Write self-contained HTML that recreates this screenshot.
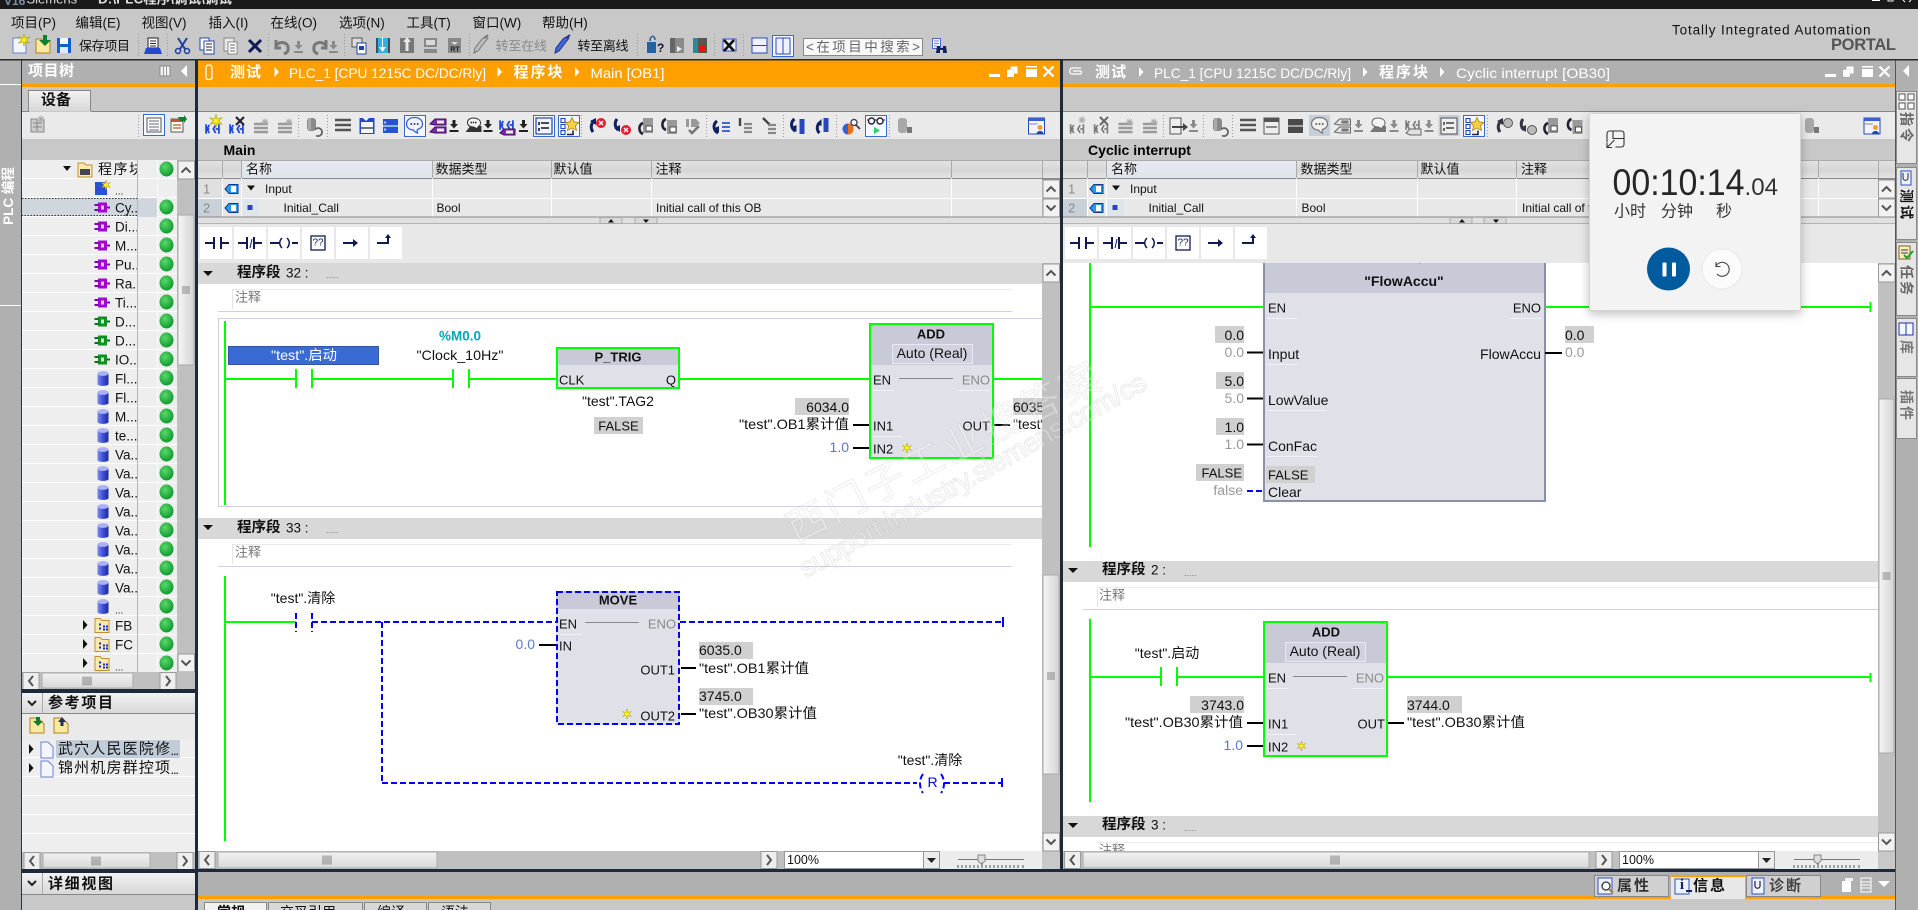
<!DOCTYPE html>
<html><head><meta charset="utf-8"><title>TIA Portal</title>
<style>
html,body{margin:0;padding:0;background:#c8c8c8;width:1918px;height:910px;overflow:hidden}
svg{display:block;position:absolute;left:0;top:0}
text{font-family:"Liberation Sans","Noto Sans CJK SC",sans-serif;font-size:12px;fill:#111;dominant-baseline:central}
.e{text-anchor:end}.m{text-anchor:middle}
.c{font-size:13px}.l{font-size:14px}.p{font-size:13px}.b{font-weight:bold}
.h{font-size:14px;fill:#fff;font-weight:bold}.hn{font-size:14px;fill:#fff}
.g{fill:#8a8a8a}.v{fill:#5878d8}.gv{fill:#999}
</style></head><body>
<svg width="1918" height="910" viewBox="0 0 1918 910" xmlns="http://www.w3.org/2000/svg">
<defs>
<radialGradient id="gd" cx=".4" cy=".35" r=".7"><stop offset="0" stop-color="#5ad86a"/><stop offset="1" stop-color="#0a962c"/></radialGradient>
<linearGradient id="cy" x1="0" x2="1" y1="0" y2="0"><stop offset="0" stop-color="#7a88f0"/><stop offset=".5" stop-color="#3e50d8"/><stop offset="1" stop-color="#1c2a90"/></linearGradient>
<linearGradient id="vt" x1="0" x2="1" y1="0" y2="0"><stop offset="0" stop-color="#f6f6f6"/><stop offset="1" stop-color="#d4d4d4"/></linearGradient>
<linearGradient id="hz" x1="0" x2="0" y1="0" y2="1"><stop offset="0" stop-color="#f2f2f2"/><stop offset="1" stop-color="#d8d8d8"/></linearGradient>
<linearGradient id="th" x1="0" x2="0" y1="0" y2="1"><stop offset="0" stop-color="#e4e4e4"/><stop offset=".55" stop-color="#d6d6d6"/><stop offset="1" stop-color="#e6e6e6"/></linearGradient>
<linearGradient id="thb" x1="0" x2="0" y1="0" y2="1"><stop offset="0" stop-color="#e6e9ee"/><stop offset="1" stop-color="#dfe4ec"/></linearGradient>
<pattern id="rowp" width="10" height="19" patternUnits="userSpaceOnUse" y="160"><rect width="10" height="19" fill="#eeeeee"/><rect y="18" width="10" height="1" fill="#fff"/></pattern>
<pattern id="rowq" width="10" height="19" patternUnits="userSpaceOnUse" y="739"><rect width="10" height="19" fill="#eeeeee"/><rect y="18" width="10" height="1" fill="#fff"/></pattern>
<filter id="sh" x="-20%" y="-20%" width="140%" height="140%"><feDropShadow dx="0" dy="3" stdDeviation="5" flood-color="#000" flood-opacity=".26"/></filter>

<ellipse id="dot" rx="7" ry="7.5" fill="url(#gd)"/>
<g id="ob"><rect x="-4" y="-5" width="9" height="10" fill="#a008d0"/><rect x="-1" y="-2" width="3" height="4" fill="#e8c8f0"/><path d="M-7.5-2.5h4M-7.5 2.5h4M5 0h3" stroke="#8000b0" stroke-width="2"/></g>
<g id="fb"><rect x="-4" y="-5" width="9" height="10" fill="#109020"/><rect x="-1" y="-2" width="3" height="4" fill="#c8f0c8"/><path d="M-7.5-2.5h4M-7.5 2.5h4M5 0h3" stroke="#0a7018" stroke-width="2"/></g>
<g id="cyl"><path d="M-5.5-5v10.5c0 2.5 11 2.5 11 0V-5z" fill="url(#cy)"/><ellipse cy="-5" rx="5.5" ry="2.4" fill="#aab0f4"/></g>
<g id="fold"><path d="M-7-7h5l2 2h7v12h-14z" fill="#fbe9b0" stroke="#c09030"/><path d="M-3-2h2v2h-2zM-3 2h2v2h-2zM1 0h2v2h-2zM1 3h2v2h-2zM4 0h2v2h-2zM4 3h2v2h-2z" fill="#1030d0"/></g>
<path id="ar" d="M0-5l4.5 5-4.5 5z" fill="#111"/>
<g id="up"><rect x="-8" y="-9" width="16.500" height="18" fill="#f2f2f2" stroke="#9a9a9a"/><path d="M-4.500 2.500l4.500-4.500 4.500 4.500" fill="none" stroke="#555" stroke-width="2"/></g>
<g id="dn"><rect x="-8" y="-9" width="16.500" height="18" fill="#f2f2f2" stroke="#9a9a9a"/><path d="M-4.500-2.500l4.500 4.500 4.500-4.500" fill="none" stroke="#555" stroke-width="2"/></g>
<g id="lf"><rect x="-8" y="-8.500" width="16" height="17" fill="#eee" stroke="#9a9a9a"/><path d="M2-5l-4 5 4 5" fill="none" stroke="#555" stroke-width="2"/></g>
<g id="rt"><rect x="-8" y="-8.500" width="16" height="17" fill="#eee" stroke="#9a9a9a"/><path d="M-2-5l4 5-4 5" fill="none" stroke="#555" stroke-width="2"/></g>
<path id="gh" d="M-4 0V9M-2 0V9M0 0V9M2 0V9M4 0V9" transform="translate(0,-4.500)" stroke="#666" stroke-width=".8"/>
<path id="gv" d="M-4-3h8M-4-1h8M-4 1h8M-4 3h8" stroke="#666" stroke-width=".8"/>
<path id="star" d="M0-5l1 3.500 3.500-1-2.500 2.500 2.500 2.500-3.500-1L0 5l-1-3.500-3.500 1L-2 0l-2.500-2.500 3.500 1z" fill="#f8f020" stroke="#b0a000" stroke-width=".5"/>
<g id="dl"><path d="M-1.500-6h3v4h2.500L0 2.500-4-2h2.500z" fill="#222"/><rect x="-4.500" y="4" width="9" height="2" fill="#222"/></g>
<g id="dlg"><path d="M-1.500-6h3v4h2.500L0 2.500-4-2h2.500z" fill="#8a8a8a"/><rect x="-4.500" y="4" width="9" height="2" fill="#8a8a8a"/></g>
<g id="kh"><path d="M-8-6v12M-8 0h4M-4-5l-3 5 3 5M4-5L1 0l3 5M8-6v12M4 0h4" fill="none" stroke="#2048d8" stroke-width="2.200" transform="translate(-.5,3) scale(.8)"/></g>
<g id="khg"><path d="M-8-6v12M-8 0h4M-4-5l-3 5 3 5M4-5L1 0l3 5M8-6v12M4 0h4" fill="none" stroke="#777" stroke-width="2" transform="translate(-.5,3) scale(.8)"/></g>
<g id="lns"><path d="M-7-3h14M-7 1h14M-7 5h14" stroke="#999" stroke-width="2.400"/><use href="#stg" x="4" y="-5"/></g>
<path id="stg" d="M0-3.500v7M-3.500 0h7M-2.500-2.500l5 5M2.500-2.500l-5 5" stroke="#aaa" stroke-width="1"/>
<g id="dbg"><rect x="-6" y="-8" width="9" height="13" rx="3" fill="#8a8a8a"/><rect x="-5" y="-8" width="3" height="12" fill="#aaa"/><path d="M2 3.500a4 4 0 1 1 1 6" fill="none" stroke="#666" stroke-width="1.800"/></g>
<g id="dbl"><rect x="-6" y="-8" width="9" height="15" rx="3" fill="#a8a8a8"/><rect x="3" y="1" width="5" height="6" fill="#777"/></g>
<g id="lst"><path d="M-8-6h5M-8-1h16M-8 4h16M-3-6h11" stroke="#555" stroke-width="2.400" transform="translate(0,1)"/></g>
<g id="win"><rect x="-7.500" y="-8" width="15" height="16" fill="#2048c8"/><rect x="-6" y="-4" width="12" height="11" fill="#f2f4ff"/><path d="M-6 2H6" stroke="#223" stroke-width="1.200"/><path d="M-4-8h6l-3 3z" fill="#fff"/></g>
<g id="winf"><rect x="-7.500" y="-7" width="15" height="14" fill="#2a50d8"/><path d="M-7.500 0h15" stroke="#cfe" stroke-width="1.200"/><path d="M-6-5l2 1.500-2 1.500M-6 2l2 1.500-2 1.500" fill="#fff"/></g>
<g id="bub"><path d="M0-7.500c-5 0-8 2.800-8 6.500 0 3.500 3 6 7 6 1 2 2.500 2.500 4 3-.5-1.500-.5-2.500 0-3.500 3-1 5-3 5-5.500 0-3.700-3-6.500-8-6.500z" fill="#eef4ff" stroke="#3a60d0" stroke-width="1.300"/><path d="M-4-1h1.600M-.8-1H.8M2.400-1H4" stroke="#334" stroke-width="1.800"/></g>
<g id="bubg"><path d="M0-7.500c-5 0-8 2.800-8 6.500 0 3.500 3 6 7 6 1 2 2.500 2.500 4 3-.5-1.500-.5-2.500 0-3.500 3-1 5-3 5-5.500 0-3.700-3-6.500-8-6.500z" fill="#f0f0f0" stroke="#777" stroke-width="1.200"/><path d="M-4-1h1.600M-.8-1H.8M2.400-1H4" stroke="#555" stroke-width="1.800"/></g>
<g id="tag1"><path d="M-8-2l5-5h11v6h-11zM-8 6l5-5h11v6h-11z" fill="#7a2aa8" stroke="#3c1060"/><path d="M-1-5.500h7v3h-7zM-1 2.500h7v3h-7z" fill="#eee"/></g>
<g id="tag1g"><path d="M-8-2l5-5h11v6h-11zM-8 6l5-5h11v6h-11z" fill="#e0e0e0" stroke="#666"/><path d="M-1-5.500h7v3h-7zM-1 2.500h7v3h-7z" fill="#777"/></g>
<g id="tag2"><path d="M-8 6h16V0H-3z" fill="#333"/><path d="M0-8c-4 0-6 2-6 4.500S-4 1 0 1c2 1 3 1 4 2 0-1 0-2 1-2.500 1.500-.8 2-2 2-3.500C7-6 4-8 0-8z" fill="#f4f4f4" stroke="#333"/><path d="M-3-3.500h1.500M-.8-3.500h1.500M1.500-3.500H3" stroke="#222" stroke-width="1.500"/></g>
<g id="tag2g"><path d="M-8 6h16V0H-3z" fill="#777"/><path d="M0-8c-4 0-6 2-6 4.500S-4 1 0 1c2 1 3 1 4 2 0-1 0-2 1-2.500 1.500-.8 2-2 2-3.500C7-6 4-8 0-8z" fill="#f4f4f4" stroke="#666"/></g>
<g id="tag3"><g transform="translate(0,-4)"><use href="#kh"/></g><path d="M-7 7l4-4h11v6h-11z" fill="#7a2aa8" stroke="#3c1060"/><rect x="-1" y="4.500" width="7" height="3" fill="#eee"/></g>
<g id="tag3g"><g transform="translate(0,-4)"><use href="#khg"/></g><path d="M-7 7l4-4h11v6h-11z" fill="#e0e0e0" stroke="#666"/></g>
<g id="tree"><rect x="-8" y="-8" width="16" height="16" fill="#f2f4ff" stroke="#2040b0" stroke-width="1.200"/><path d="M-5-4v3M-3-3H5M-5 2v3M-3 2H5" stroke="#112" stroke-width="1.600"/></g>
<g id="treeg"><rect x="-8" y="-8" width="16" height="16" fill="#eee" stroke="#666" stroke-width="1.200"/><path d="M-5-4v3M-3-3H5M-5 2v3M-3 2H5" stroke="#444" stroke-width="1.600"/></g>
<g id="favs"><path d="M-8-7h4v4h-4zM-8-1h4v4h-4zM-8 5h4v4h-4z" fill="#fff" stroke="#2040c0" stroke-width="1.100"/><path d="M3-8l2.200 4.400 4.800.6-3.500 3.300 1 4.700L3 2.500-1.500 5l1-4.700L-4-3l4.800-.6z" fill="#f8d040" stroke="#a07010" stroke-width=".7"/><path d="M4 5v4h-6" fill="none" stroke="#223" stroke-width="1.600"/></g>
<g id="rc1"><path d="M-2 6a8 8 0 0 1 1-11" fill="none" stroke="#102060" stroke-width="3"/><path d="M-5-5l6-3v7z" fill="#102060"/><circle cx="6" cy="-3" r="5" fill="#e02030"/><path d="M4-5l4 4M8-5l-4 4" stroke="#fff" stroke-width="1.400"/></g>
<g id="rc2"><path d="M-3-7a8 8 0 0 0 1 11" fill="none" stroke="#102060" stroke-width="3"/><path d="M-6 2l6 4v-7z" fill="#102060"/><circle cx="6" cy="4" r="5" fill="#e02030"/><path d="M4 2l4 4M8 2l-4 4" stroke="#fff" stroke-width="1.400"/></g>
<g id="rc1g"><path d="M-2 6a8 8 0 0 1 1-11" fill="none" stroke="#334" stroke-width="3"/><path d="M-5-5l6-3v7z" fill="#334"/><circle cx="6" cy="-3" r="4.500" fill="#bbb" stroke="#555"/></g>
<g id="rc2g"><path d="M-3-7a8 8 0 0 0 1 11" fill="none" stroke="#334" stroke-width="3"/><path d="M-6 2l6 4v-7z" fill="#334"/><circle cx="6" cy="4" r="4.500" fill="#bbb" stroke="#555"/></g>
<g id="rc3"><rect x="-2" y="-8" width="10" height="15" fill="#999"/><rect x="1" y="0" width="6" height="5" fill="#fff" stroke="#333" stroke-width=".8"/><path d="M-2 8a6 6 0 0 1 0-11" fill="none" stroke="#223" stroke-width="2.600"/></g>
<g id="rc4"><rect x="-2" y="-6" width="10" height="14" fill="#999"/><rect x="1" y="1" width="6" height="5" fill="#fff" stroke="#333" stroke-width=".8"/><path d="M-3-7a6 6 0 0 0 0 11" fill="none" stroke="#223" stroke-width="2.600"/></g>
<g id="rc5"><path d="M-7-7h3v8h-3zM-2-7h5l4 4-4 4h-5z" fill="#999"/><path d="M-4 4l3 3 7-7" fill="none" stroke="#777" stroke-width="2.600"/></g>
<g id="rc6"><path d="M-4-5a7 7 0 0 0 1 12" fill="none" stroke="#102060" stroke-width="3"/><path d="M-8 3l6 4V0z" fill="#102060"/><path d="M1-3h8M1 1h8M1 5h8" stroke="#4068d0" stroke-width="2"/></g>
<g id="rc7"><path d="M-6-8v8" stroke="#444" stroke-width="2.400"/><path d="M-2-2h8M-2 2h8M-2 6h8" stroke="#888" stroke-width="2.200"/></g>
<g id="rc8"><path d="M-7-8l7 7" stroke="#444" stroke-width="2.400"/><path d="M-2-1h8M-2 3h8M-2 7h8" stroke="#888" stroke-width="2.200"/></g>
<g id="rc9"><path d="M-3-7a7 7 0 0 0 1 12" fill="none" stroke="#102060" stroke-width="3"/><path d="M-6 1l5 5V-1z" fill="#102060"/><rect x="2" y="-7" width="5" height="15" fill="#2848b8"/></g>
<g id="rc10"><path d="M-2 7a7 7 0 0 1 1-11" fill="none" stroke="#102060" stroke-width="3"/><path d="M-5-2l5-5v7z" fill="#102060"/><rect x="2" y="-8" width="5" height="14" fill="#2848b8"/></g>
<g id="cmp"><circle cx="-3" cy="3" r="5.500" fill="#3a60d0"/><path d="M-3-2.500a5.500 5.500 0 0 1 0 11z" fill="#f07010"/><circle cx="3" cy="-3.500" r="3" fill="#fff" stroke="#445" stroke-width="1.400"/><path d="M5-1l4 4" stroke="#445" stroke-width="1.800"/></g>
<g id="gls"><path d="M-9-6h18" stroke="#223" stroke-width="1"/><circle cx="-4.500" cy="-5" r="3" fill="#fff" stroke="#223" stroke-width="1.400"/><circle cx="4" cy="-5" r="3" fill="#fff" stroke="#223" stroke-width="1.400"/><path d="M-2 1v7l6-3.500z" fill="#30d060"/></g>
<g id="usr"><rect x="-8" y="-8" width="16" height="16" fill="#f4f4f8" stroke="#2848b8"/><rect x="-8" y="-8" width="16" height="3" fill="#3a60d0"/><path d="M-8-2H1" stroke="#889"/><circle cx="3.500" cy="1.500" r="2.500" fill="#e8a030"/><path d="M0 8c0-4 7-4 7 0z" fill="#2048a0"/></g>
<g id="close"><path d="M-5-5L5 5M5-5L-5 5" stroke="#fff" stroke-width="2.200"/></g>
<g id="restore"><rect x="-1.500" y="-5" width="7" height="7" fill="#fff"/><rect x="-5" y="-2" width="7" height="7.500" fill="#fff" stroke="#000" stroke-opacity=".08"/></g>
</defs>

<rect width="1918" height="910" fill="#c8c8c8"/>

<!-- ============== LEFT EDITOR CONTENT ============== -->
<rect x="198" y="263" width="844" height="606" fill="#fff"/>
<rect x="198" y="263" width="844" height="21" fill="#d8d8d8"/>
<path d="M203 271l5 5 5-5z" fill="#111"/>
<text x="237" y="273" class="b" style="font-size:14.500px">程序段</text><text x="286" y="273" style="font-size:13.500px">32 :</text><text x="326" y="275" style="font-size:9px;fill:#777">.....</text>
<rect x="232" y="289" width="780" height="1" fill="#ececec"/><rect x="232" y="289" width="1" height="20" fill="#e4e4e4"/>
<text x="235" y="297" style="font-size:13px;fill:#777">注释</text>
<rect x="218" y="311" width="794" height="1" fill="#d0d0e4"/>
<rect x="218.500" y="318.500" width="840" height="188" fill="none" stroke="#cdcde8"/>
<rect x="224" y="321" width="2" height="184" fill="#00ff00"/>
<rect x="228" y="346" width="151" height="19" fill="#3a6bd4"/><rect x="228.500" y="346.500" width="150" height="18" fill="none" stroke="#223" stroke-dasharray="1 1" stroke-opacity=".6"/>
<text x="304" y="355" class="l m" style="fill:#fff" textLength="66" lengthAdjust="spacingAndGlyphs">"test".启动</text>
<text x="460" y="336" class="l m b" style="fill:#00a8b8;font-size:13.500px">%M0.0</text>
<text x="460" y="355" class="l m" textLength="87" lengthAdjust="spacingAndGlyphs">"Clock_10Hz"</text>
<path d="M225 379h71M296 369v19M312 369v19M312 379h141M453 369v19M469 369v19M469 379h87M680 379h189M993 379h49" stroke="#00ff00" stroke-width="2" fill="none"/>
<!-- P_TRIG -->
<rect x="556" y="347" width="124" height="42" fill="#e0e0e8"/><rect x="556" y="347" width="124" height="18" fill="#c8cad8"/><rect x="557" y="348" width="122" height="40" fill="none" stroke="#00ff00" stroke-width="2"/>
<text x="618" y="357" class="p m b">P_TRIG</text><text x="559" y="380" class="p">CLK</text><text x="676" y="380" class="p e">Q</text>
<text x="618" y="401" class="l m">"test".TAG2</text>
<rect x="594" y="417" width="49" height="17" fill="#d0d0d0"/><text x="618.500" y="426" class="p m">FALSE</text>
<!-- ADD -->
<rect x="869" y="323" width="125" height="136" fill="#e0e0e8"/><rect x="869" y="323" width="125" height="42" fill="#c8cad8"/><rect x="870" y="324" width="123" height="134" fill="none" stroke="#00ff00" stroke-width="2"/>
<text x="931" y="334" class="p m b">ADD</text><rect x="892.500" y="344.500" width="80" height="19" fill="#d0d2e0" stroke="#e8e8f0"/><text x="932" y="353" class="l m">Auto (Real)</text>
<text x="873" y="380" class="p">EN</text><text x="990" y="380" class="p e g">ENO</text><path d="M899 378.500h54" stroke="#888"/>
<path d="M872 390.500h22M958 390.500h32M872 436.500h30" stroke="#f2f2f6"/>
<text x="873" y="426" class="p">IN1</text><text x="990" y="426" class="p e">OUT</text><text x="873" y="449" class="p">IN2</text><use href="#star" x="907" y="448"/>
<path d="M853 425h16M853 448h16M994 425h16" stroke="#000" stroke-width="2"/>
<rect x="795" y="398" width="54" height="17" fill="#d0d0d0"/><text x="849" y="407" class="l e">6034.0</text>
<text x="849" y="424" class="l e" textLength="110" lengthAdjust="spacingAndGlyphs">"test".OB1累计值</text>
<text x="849" y="447" class="l e v">1.0</text>
<rect x="1013" y="398" width="40" height="17" fill="#d0d0d0"/><text x="1013" y="407" class="l">6035.0</text><text x="1013" y="424" class="l">"test".OB1累计值</text>
<!-- NW 33 -->
<rect x="198" y="518" width="844" height="21" fill="#d8d8d8"/><path d="M203 525l5 5 5-5z" fill="#111"/>
<text x="237" y="528" class="b" style="font-size:14.500px">程序段</text><text x="286" y="528" style="font-size:13.500px">33 :</text><text x="326" y="530" style="font-size:9px;fill:#777">.....</text>
<rect x="232" y="544" width="780" height="1" fill="#ececec"/><rect x="232" y="544" width="1" height="20" fill="#e4e4e4"/>
<text x="235" y="552" style="font-size:13px;fill:#777">注释</text><rect x="218" y="566" width="794" height="1" fill="#d0d0e4"/>
<rect x="224" y="576" width="2" height="265" fill="#00ff00"/>
<path d="M225 622h71" stroke="#00ff00" stroke-width="2"/>
<text x="303" y="598" class="l m">"test".清除</text>
<g stroke="#0000ff" stroke-width="2" fill="none" stroke-dasharray="6 3">
<path d="M296 613v19M312 613v19"/><path d="M312 622h244M382 622v161M382 783h535M944 783h58M680 622h323"/>
</g>
<path d="M1002 778v9M1003 617v10" stroke="#0000ff" stroke-width="2"/>
<path d="M923 774c-4 5-4 14 0 19M941 774c4 5 4 14 0 19" fill="none" stroke="#0000ff" stroke-width="2" stroke-dasharray="6 3"/>
<text x="932.500" y="782" class="m" style="fill:#0000ff;font-size:14px">R</text>
<text x="930" y="760" class="l m">"test".清除</text>
<!-- MOVE -->
<rect x="556" y="591" width="124" height="134" fill="#e0e0e8"/><rect x="556" y="591" width="124" height="18" fill="#c8cad8"/><rect x="557" y="592" width="122" height="132" fill="none" stroke="#0000ff" stroke-width="2" stroke-dasharray="6 3"/>
<text x="618" y="600" class="p m b">MOVE</text><text x="559" y="624" class="p">EN</text><text x="676" y="624" class="p e g">ENO</text><path d="M585 622.500h54" stroke="#888"/>
<path d="M560 634.500h22" stroke="#f2f2f6"/>
<text x="559" y="646" class="p">IN</text><text x="675" y="670" class="p e">OUT1</text><text x="675" y="716" class="p e">OUT2</text><use href="#star" x="627" y="714"/>
<path d="M539 645h17M681 668h15M681 714h15" stroke="#000" stroke-width="2"/>
<text x="535" y="644" class="l e v">0.0</text>
<rect x="699" y="642" width="54" height="17" fill="#d0d0d0"/><text x="699" y="650" class="l">6035.0</text><text x="699" y="668" class="l" textLength="110" lengthAdjust="spacingAndGlyphs">"test".OB1累计值</text>
<rect x="699" y="688" width="54" height="17" fill="#d0d0d0"/><text x="699" y="696" class="l">3745.0</text><text x="699" y="713" class="l" textLength="118" lengthAdjust="spacingAndGlyphs">"test".OB30累计值</text>

<!-- left editor scrollbars -->
<rect x="1042" y="263" width="18" height="588" fill="#c0c0c0"/>
<use href="#up" x="1051" y="273"/>
<rect x="1043" y="575" width="16" height="199" fill="url(#vt)" stroke="#aaa"/><use href="#gv" x="1051" y="676"/>
<use href="#dn" x="1051" y="842"/>
<rect x="198" y="851" width="844" height="18" fill="#c0c0c0"/>
<use href="#lf" x="207" y="860"/><rect x="218" y="852" width="219" height="16" fill="url(#hz)" stroke="#aaa"/><use href="#gh" x="327" y="860"/>
<use href="#rt" x="769" y="860"/>
<rect x="784.500" y="851.500" width="139" height="17" fill="#fff" stroke="#999"/><text x="787" y="860" style="font-size:12.500px">100%</text>
<rect x="923.500" y="851.500" width="16" height="17" fill="#ececec" stroke="#999"/><path d="M927 858h9l-4.500 5z" fill="#222"/>
<rect x="940" y="851" width="102" height="18" fill="#ececec"/>
<path d="M958 859.500h66" stroke="#777"/><path d="M978 855h7v6l-3.500 3-3.500-3z" fill="#ddd" stroke="#888"/>
<path d="M958 865v3M962 865v3M966 865v3M970 865v3M974 865v3M978 865v3M982 863v5M986 865v3M990 865v3M994 865v3M998 865v3M1002 865v3M1006 865v3M1010 865v3M1014 865v3M1018 865v3M1023 865v3" stroke="#555"/>

<!-- ============== RIGHT EDITOR CONTENT ============== -->
<rect x="1063" y="263" width="815" height="588" fill="#fff"/>
<rect x="1089" y="263" width="2" height="284" fill="#00ff00"/>
<path d="M1090 307h173M1545 307h326M1870.500 302v10" stroke="#00ff00" stroke-width="2"/>
<rect x="1263" y="263" width="283" height="239" fill="#e0e0e8"/><rect x="1263" y="263" width="283" height="30" fill="#c8cad8"/><rect x="1264" y="258" width="281" height="243" fill="none" stroke="#8a90a8" stroke-width="2"/>
<text x="1404" y="258" class="m b" style="font-size:14px;fill:#00a8b8">%DB17/00</text>
<text x="1404" y="281" class="l m b" style="font-size:14px">"FlowAccu"</text>
<text x="1268" y="308" class="l" style="font-size:13px">EN</text><text x="1541" y="308" class="p e">ENO</text>
<text x="1268" y="354" class="l">Input</text><text x="1268" y="400" class="l">LowValue</text><text x="1268" y="446" class="l">ConFac</text>
<rect x="1266" y="466" width="49" height="17" fill="#d0d0d0"/><text x="1268" y="475" class="p">FALSE</text><text x="1268" y="492" class="l">Clear</text>
<text x="1541" y="354" class="l e" textLength="61" lengthAdjust="spacingAndGlyphs">FlowAccu</text>
<path d="M1267 318.500h30M1510 318.500h31M1267 364.500h30M1267 410.500h60M1267 456.500h50" stroke="#f2f2f6"/>
<path d="M1247 352.500h16M1247 398.500h16M1247 444.500h16M1545 353h17" stroke="#000" stroke-width="2"/>
<path d="M1247 491h16" stroke="#0000ff" stroke-width="2" stroke-dasharray="6 3"/>
<rect x="1215" y="326" width="29" height="17" fill="#d0d0d0"/><text x="1244" y="335" class="l e">0.0</text><text x="1244" y="352" class="l e gv">0.0</text>
<rect x="1216" y="372" width="28" height="17" fill="#d0d0d0"/><text x="1244" y="381" class="l e">5.0</text><text x="1244" y="398" class="l e gv">5.0</text>
<rect x="1216" y="418" width="28" height="17" fill="#d0d0d0"/><text x="1244" y="427" class="l e">1.0</text><text x="1244" y="444" class="l e gv">1.0</text>
<rect x="1196" y="464" width="48" height="17" fill="#d0d0d0"/><text x="1242" y="473" class="p e">FALSE</text><text x="1243" y="490" class="l e gv">false</text>
<rect x="1565" y="326" width="29" height="17" fill="#d0d0d0"/><text x="1565" y="335" class="l">0.0</text><text x="1565" y="352" class="l gv">0.0</text>
<rect x="1063" y="561" width="815" height="21" fill="#d8d8d8"/><path d="M1068 568l5 5 5-5z" fill="#111"/>
<text x="1102" y="570" class="b" style="font-size:14.500px">程序段</text><text x="1151" y="570" style="font-size:13.500px">2 :</text><text x="1184" y="573" style="font-size:9px;fill:#777">.....</text>
<rect x="1097" y="587" width="781" height="1" fill="#ececec"/><rect x="1097" y="587" width="1" height="20" fill="#e4e4e4"/>
<text x="1099" y="595" style="font-size:13px;fill:#777">注释</text><rect x="1083" y="609" width="795" height="1" fill="#d0d0e4"/>
<rect x="1089" y="619" width="2" height="183" fill="#00ff00"/>
<path d="M1090 677h71M1161 667v19M1177 667v19M1177 677h86M1388 677h483M1870.500 673v9" stroke="#00ff00" stroke-width="2" fill="none"/>
<text x="1167" y="653" class="l m">"test".启动</text>
<rect x="1263" y="621" width="125" height="136" fill="#e0e0e8"/><rect x="1263" y="621" width="125" height="42" fill="#c8cad8"/><rect x="1264" y="622" width="123" height="134" fill="none" stroke="#00ff00" stroke-width="2"/>
<text x="1326" y="632" class="p m b">ADD</text><rect x="1285.500" y="642.500" width="80" height="19" fill="#d0d2e0" stroke="#e8e8f0"/><text x="1325" y="651" class="l m">Auto (Real)</text>
<text x="1268" y="678" class="p">EN</text><text x="1384" y="678" class="p e g">ENO</text><path d="M1293 676.500h54" stroke="#888"/>
<path d="M1266 688.500h22M1352 688.500h32M1266 734.500h30" stroke="#f2f2f6"/>
<text x="1268" y="724" class="p">IN1</text><text x="1385" y="724" class="p e">OUT</text><text x="1268" y="747" class="p">IN2</text><use href="#star" x="1301.500" y="746"/>
<path d="M1247 723h16M1247 746h16M1388 723h16" stroke="#000" stroke-width="2"/>
<rect x="1190" y="696" width="54" height="17" fill="#d0d0d0"/><text x="1244" y="705" class="l e">3743.0</text>
<text x="1243" y="722" class="l e" textLength="118" lengthAdjust="spacingAndGlyphs">"test".OB30累计值</text><text x="1243" y="745" class="l e v">1.0</text>
<rect x="1407" y="696" width="55" height="17" fill="#d0d0d0"/><text x="1407" y="705" class="l">3744.0</text><text x="1407" y="722" class="l" textLength="118" lengthAdjust="spacingAndGlyphs">"test".OB30累计值</text>
<rect x="1063" y="816" width="815" height="21" fill="#d8d8d8"/><path d="M1068 823l5 5 5-5z" fill="#111"/>
<text x="1102" y="825" class="b" style="font-size:14.500px">程序段</text><text x="1151" y="825" style="font-size:13.500px">3 :</text><text x="1184" y="828" style="font-size:9px;fill:#777">.....</text>
<rect x="1097" y="842" width="781" height="1" fill="#ececec"/><text x="1099" y="850" style="font-size:13px;fill:#777">注释</text>
<!-- right editor scrollbars -->
<rect x="1878" y="263" width="17" height="588" fill="#c0c0c0"/><use href="#up" x="1886.500" y="273"/>
<rect x="1879" y="399" width="15" height="354" fill="url(#vt)" stroke="#aaa"/><use href="#gv" x="1886.500" y="576"/><use href="#dn" x="1886.500" y="842"/>
<rect x="1063" y="851" width="815" height="18" fill="#c0c0c0"/>
<use href="#lf" x="1072.500" y="860"/><rect x="1083" y="852" width="506" height="16" fill="url(#hz)" stroke="#aaa"/><use href="#gh" x="1335" y="860"/>
<use href="#rt" x="1604" y="860"/>
<rect x="1619.500" y="851.500" width="139" height="17" fill="#fff" stroke="#999"/><text x="1622" y="860" style="font-size:12.500px">100%</text>
<rect x="1758.500" y="851.500" width="16" height="17" fill="#ececec" stroke="#999"/><path d="M1762 858h9l-4.500 5z" fill="#222"/>
<rect x="1775" y="851" width="103" height="18" fill="#ececec"/>
<path d="M1794 859.500h66" stroke="#777"/><path d="M1814 855h7v6l-3.500 3-3.500-3z" fill="#ddd" stroke="#888"/>
<path d="M1794 865v3M1798 865v3M1802 865v3M1806 865v3M1810 865v3M1814 865v3M1818 863v5M1822 865v3M1826 865v3M1830 865v3M1834 865v3M1838 865v3M1842 865v3M1846 865v3M1850 865v3M1854 865v3M1859 865v3" stroke="#555"/>

<!-- watermark -->
<g transform="rotate(-29 801 570)">
<text x="801" y="570" style="font-size:28px;fill:#fff;fill-opacity:.3;stroke:#b4b4b4;stroke-opacity:.28;stroke-width:1" textLength="392">support.industry.siemens.com/cs</text>
</g>
<g transform="rotate(-27 790 532)">
<text x="790" y="532" style="font-size:40px;fill:#fff;fill-opacity:.3;stroke:#b4b4b4;stroke-opacity:.24;stroke-width:1" textLength="345">西门子工业搜答案</text>
</g>

<!-- ============== TOP PANELS ============== -->
<!-- left editor top -->
<rect x="198" y="60" width="862" height="27" fill="#ffa000"/>
<rect x="198" y="87" width="862" height="24" fill="#c8c8c8"/><rect x="198" y="111" width="862" height="1" fill="#858585"/>
<rect x="198" y="112" width="862" height="27" fill="#eaeaea"/>
<rect x="198" y="139" width="862" height="21" fill="#c8c8c8"/>
<text x="223.500" y="150" class="b" style="font-size:14px;fill:#000">Main</text>
<!-- table -->
<rect x="198" y="160" width="862" height="19" fill="url(#th)"/>
<rect x="241" y="160" width="191" height="19" fill="url(#thb)"/>
<rect x="198" y="160" width="862" height="1" fill="#aaa"/><rect x="198" y="178" width="862" height="1.500" fill="#888"/>
<rect x="198" y="179" width="844" height="38" fill="#e8e8e8"/>
<rect x="198" y="179" width="24" height="19" fill="#e0e0e0"/><rect x="198" y="198" width="24" height="19" fill="#c8d0d8"/>
<rect x="222" y="179" width="19" height="38" fill="#e6e6e6"/>
<rect x="241" y="198" width="18" height="19" fill="#e0e4ec"/>
<path d="M198 198.500h844" stroke="#fff"/>
<path d="M222.500 160v57M241.500 160v57M432.500 160v57M551.500 160v57M651.500 160v57M951.500 160v57" stroke="#fff"/>
<path d="M222.500 160v18M241.500 160v18M432.500 160v18M551.500 160v18M651.500 160v18M951.500 160v18M1042.500 160v18" stroke="#aaa"/>
<text x="246" y="169" style="font-size:13px">名称</text><text x="435.500" y="169" style="font-size:13px">数据类型</text><text x="553.500" y="169" style="font-size:13px">默认值</text><text x="655.500" y="169" style="font-size:13px">注释</text>
<text x="203" y="189" class="g" style="font-size:13px">1</text><text x="203" y="208" class="g" style="font-size:13px">2</text>
<path d="M225 189l4-4.500h9v9h-9z" fill="#2a9ae8" stroke="#0a3a90"/><rect x="231" y="186" width="5" height="6" fill="#fff"/>
<path d="M225 208l4-4.500h9v9h-9z" fill="#2a9ae8" stroke="#0a3a90"/><rect x="231" y="205" width="5" height="6" fill="#fff"/>
<path d="M247 185.500h8l-4 5z" fill="#111"/><rect x="247.500" y="205" width="5" height="5" fill="#2a40d0"/>
<text x="265" y="189">Input</text><text x="283.500" y="208">Initial_Call</text><text x="436.500" y="208">Bool</text><text x="656" y="208">Initial call of this OB</text>
<use href="#up" x="1051" y="189"/><use href="#dn" x="1051" y="208"/>
<rect x="198" y="217" width="862" height="7" fill="#e0e0e0"/><path d="M198 217h862M198 224h862" stroke="#888"/>
<rect x="600" y="217.500" width="22" height="6" fill="#d8d8d8" stroke="#aaa"/><rect x="635" y="217.500" width="22" height="6" fill="#d8d8d8" stroke="#aaa"/>
<path d="M608 222.500l3-3.500 3 3.500z" fill="#111"/><path d="M643 219.500l3 3.500 3-3.500z" fill="#111"/>
<!-- instr bar -->
<rect x="198" y="224" width="862" height="39" fill="#e8e8e8"/>
<g fill="#fff"><rect x="200" y="227" width="32" height="32"/><rect x="234" y="227" width="32" height="32"/><rect x="268" y="227" width="32" height="32"/><rect x="302" y="227" width="32" height="32"/><rect x="336" y="227" width="32" height="32"/><rect x="370" y="227" width="32" height="32"/></g>
<g fill="none" stroke="#101a50" stroke-width="2"><path d="M205 243h9M214 237v12M221 237v12M221 243h8"/><path d="M238 243h9M247 237v12M254 237v12M254 243h8"/><path d="M250 248l2-9" stroke-width="1"/><path d="M270 243h10M292 243h6"/><path d="M282 238c-3 3-3 7 0 10M287 238c3 3 3 7 0 10" stroke-width="1.500"/><rect x="311" y="236" width="14" height="14" stroke-width="1.300"/><path d="M343 243h12"/><path d="M377 243h11V236"/></g>
<text x="318" y="243" class="m" style="font-size:10px;fill:#101a50">??</text>
<path d="M353 239l5 4-5 4zM385 238l3-4 3 4z" fill="#101a50"/>
<!-- left editor toolbar -->
<g>
<use href="#kh" x="213" y="126"/><use href="#star" transform="translate(216,121) scale(1.300)"/>
<use href="#kh" x="237" y="126"/><path d="M236 117l8 8M244 117l-8 8" stroke="#223" stroke-width="2.200"/>
<use href="#lns" x="261" y="127"/><use href="#lns" x="285" y="127"/>
<path d="M298.500 115v22M327.500 115v22M581.500 115v22M706.500 115v22M783.500 115v22M836.500 115v22M889.500 115v22" stroke="#999" stroke-dasharray="1 2"/>
<use href="#dbg" x="313" y="126"/>
<use href="#lst" x="343" y="125"/>
<use href="#win" x="367" y="126"/><use href="#winf" x="390.500" y="126"/>
<rect x="404.500" y="115.500" width="21" height="21" fill="#f4f8ff" stroke="#3a6ad0"/><use href="#bub" x="414.500" y="125"/>
<use href="#tag1" x="438" y="126"/><use href="#dl" x="454" y="126"/>
<use href="#tag2" x="473.500" y="126"/><use href="#dl" x="488" y="126"/>
<use href="#tag3" x="507" y="126"/><use href="#dl" x="523.500" y="126"/>
<rect x="533.500" y="115.500" width="21" height="21" fill="#f4f8ff" stroke="#3a6ad0"/><use href="#tree" x="544" y="126"/>
<rect x="558.500" y="115.500" width="21" height="21" fill="#f4f8ff" stroke="#3a6ad0"/><use href="#favs" x="569" y="125.500"/>
<use href="#rc1" x="595" y="126"/><use href="#rc2" x="620" y="126"/>
<use href="#rc3" x="645" y="126"/><use href="#rc4" x="669" y="126"/><use href="#rc5" x="693" y="126"/>
<use href="#rc6" x="721" y="126"/><use href="#rc7" x="746" y="126"/><use href="#rc8" x="770" y="126"/>
<use href="#rc9" x="797.500" y="126"/><use href="#rc10" x="821.500" y="126"/>
<use href="#cmp" x="851" y="126"/>
<rect x="865.500" y="115.500" width="21" height="21" fill="#f4f8ff" stroke="#3a6ad0"/><use href="#gls" x="876" y="126"/>
<use href="#dbl" x="904" y="126"/><use href="#usr" x="1036.500" y="126"/>
</g>
<!-- left header -->
<path d="M209 65c-3 0-3 2-3 4v9c0 2 6 2 6 0v-9c0-2 0-4-3-4z" fill="none" stroke="#fff" stroke-width="1.300"/>
<text x="230" y="72.500" class="h" textLength="31" style="font-size:15px">测试</text>
<path d="M274.500 67l4.500 5-4.500 5z" fill="#fff"/>
<text x="289" y="73" class="hn" textLength="197" lengthAdjust="spacingAndGlyphs">PLC_1 [CPU 1215C DC/DC/Rly]</text>
<path d="M497.500 67l4.500 5-4.500 5z" fill="#fff"/>
<text x="513.500" y="72.500" class="h" textLength="49" style="font-size:15px">程序块</text>
<path d="M575 67l4.500 5-4.500 5z" fill="#fff"/>
<text x="590.500" y="73" class="hn" textLength="74" lengthAdjust="spacingAndGlyphs">Main [OB1]</text>
<rect x="989" y="74" width="11" height="3" fill="#fff"/><use href="#restore" x="1012" y="71.500"/>
<rect x="1026" y="66" width="11" height="11" fill="#fff"/><rect x="1026" y="67.500" width="11" height="1.500" fill="#ffa000"/><use href="#close" x="1048.500" y="71.500"/>

<!-- right editor top -->
<rect x="1063" y="60" width="832" height="24" fill="#b0b0b0"/><rect x="1063" y="84" width="832" height="3" fill="#ffa000"/>
<rect x="1063" y="87" width="832" height="24" fill="#c8c8c8"/><rect x="1063" y="111" width="832" height="1" fill="#858585"/>
<rect x="1063" y="112" width="832" height="27" fill="#eaeaea"/>
<rect x="1063" y="139" width="832" height="21" fill="#c8c8c8"/>
<text x="1088" y="150" class="b" textLength="103" lengthAdjust="spacingAndGlyphs" style="font-size:14px;fill:#000">Cyclic interrupt</text>
<rect x="1063" y="160" width="832" height="19" fill="url(#th)"/><rect x="1106" y="160" width="190" height="19" fill="url(#thb)"/>
<rect x="1063" y="160" width="832" height="1" fill="#aaa"/><rect x="1063" y="178" width="832" height="1.500" fill="#888"/>
<rect x="1063" y="179" width="815" height="38" fill="#e8e8e8"/>
<rect x="1063" y="179" width="24" height="19" fill="#e0e0e0"/><rect x="1063" y="198" width="24" height="19" fill="#c8d0d8"/>
<rect x="1106" y="198" width="18" height="19" fill="#e0e4ec"/>
<path d="M1063 198.500h815" stroke="#fff"/>
<path d="M1087.500 160v57M1106.500 160v57M1296.500 160v57M1417.500 160v57M1516.500 160v57M1818.500 160v57" stroke="#fff"/>
<path d="M1087.500 160v18M1106.500 160v18M1296.500 160v18M1417.500 160v18M1516.500 160v18M1818.500 160v18M1878.500 160v18" stroke="#aaa"/>
<text x="1111" y="169" style="font-size:13px">名称</text><text x="1300.500" y="169" style="font-size:13px">数据类型</text><text x="1420.500" y="169" style="font-size:13px">默认值</text><text x="1521" y="169" style="font-size:13px">注释</text>
<text x="1068" y="189" class="g" style="font-size:13px">1</text><text x="1068" y="208" class="g" style="font-size:13px">2</text>
<path d="M1090 189l4-4.500h9v9h-9z" fill="#2a9ae8" stroke="#0a3a90"/><rect x="1096" y="186" width="5" height="6" fill="#fff"/>
<path d="M1090 208l4-4.500h9v9h-9z" fill="#2a9ae8" stroke="#0a3a90"/><rect x="1096" y="205" width="5" height="6" fill="#fff"/>
<path d="M1112 185.500h8l-4 5z" fill="#111"/><rect x="1112.500" y="205" width="5" height="5" fill="#2a40d0"/>
<text x="1130" y="189">Input</text><text x="1148.500" y="208">Initial_Call</text><text x="1301.500" y="208">Bool</text><text x="1522" y="208">Initial call of this OB</text>
<use href="#up" x="1886.500" y="189"/><use href="#dn" x="1886.500" y="208"/>
<rect x="1063" y="217" width="832" height="7" fill="#e0e0e0"/><path d="M1063 217h832M1063 224h832" stroke="#888"/>
<rect x="1450" y="217.500" width="22" height="6" fill="#d8d8d8" stroke="#aaa"/><rect x="1484" y="217.500" width="22" height="6" fill="#d8d8d8" stroke="#aaa"/>
<path d="M1459 222.500l3-3.500 3 3.500z" fill="#111"/><path d="M1493 219.500l3 3.500 3-3.500z" fill="#111"/>
<rect x="1063" y="224" width="832" height="39" fill="#e8e8e8"/>
<g fill="#fff"><rect x="1065" y="227" width="32" height="32"/><rect x="1099" y="227" width="32" height="32"/><rect x="1133" y="227" width="32" height="32"/><rect x="1167" y="227" width="32" height="32"/><rect x="1201" y="227" width="32" height="32"/><rect x="1235" y="227" width="32" height="32"/></g>
<g fill="none" stroke="#101a50" stroke-width="2"><path d="M1070 243h9M1079 237v12M1086 237v12M1086 243h8"/><path d="M1103 243h9M1112 237v12M1119 237v12M1119 243h8"/><path d="M1115 248l2-9" stroke-width="1"/><path d="M1135 243h10M1157 243h6"/><path d="M1147 238c-3 3-3 7 0 10M1152 238c3 3 3 7 0 10" stroke-width="1.500"/><rect x="1176" y="236" width="14" height="14" stroke-width="1.300"/><path d="M1208 243h12"/><path d="M1242 243h11V236"/></g>
<text x="1183" y="243" class="m" style="font-size:10px;fill:#101a50">??</text>
<path d="M1218 239l5 4-5 4zM1250 238l3-4 3 4z" fill="#101a50"/>
<!-- right toolbar -->
<g>
<use href="#khg" x="1077.500" y="126"/><use href="#stg" x="1082" y="120"/>
<use href="#khg" x="1101.500" y="126"/><path d="M1100 117l8 8M1108 117l-8 8" stroke="#666" stroke-width="2"/>
<use href="#lns" x="1125.500" y="127"/><use href="#lns" x="1150" y="127"/>
<path d="M1163.500 115v22M1203.500 115v22M1232.500 115v22M1487.500 115v22" stroke="#999" stroke-dasharray="1 2"/>
<rect x="1170" y="118" width="11" height="16" fill="#eee" stroke="#555"/><path d="M1172 126h11v-3l5 4-5 4v-3h-11z" fill="#444"/>
<use href="#dlg" x="1193.500" y="126"/><use href="#dbg" x="1219" y="126"/>
<use href="#lst" x="1248" y="125"/>
<rect x="1264" y="118" width="15" height="16" fill="#eee" stroke="#555"/><rect x="1264" y="118" width="15" height="4" fill="#555"/><path d="M1266 127h11" stroke="#444" stroke-width="1.200"/>
<rect x="1288" y="119" width="15" height="14" fill="#4a4a4a"/><path d="M1288 126h15" stroke="#ddd" stroke-width="1.200"/>
<rect x="1309" y="115" width="21" height="21" fill="#c6cfd8"/><use href="#bubg" x="1319.500" y="125"/>
<use href="#tag1g" x="1342.500" y="126"/><use href="#dlg" x="1358.500" y="126"/>
<use href="#tag2g" x="1378" y="126"/><use href="#dlg" x="1394" y="126"/>
<use href="#tag3g" x="1413" y="126"/><use href="#dlg" x="1429" y="126"/>
<rect x="1438.500" y="115" width="21" height="21" fill="#c6cfd8"/><use href="#treeg" x="1449" y="126"/>
<rect x="1463.500" y="115.500" width="21" height="21" fill="#f4f8ff" stroke="#3a6ad0"/><use href="#favs" x="1474" y="125.500"/>
<use href="#rc1g" x="1502" y="126"/><use href="#rc2g" x="1526" y="126"/><use href="#rc3" x="1550" y="126"/><use href="#rc4" x="1574.500" y="126"/>
<use href="#dbl" x="1811" y="126"/><use href="#usr" x="1872" y="126"/>
</g>
<!-- right header -->
<path d="M1081 68h-9c-3 0-3 6 0 6h8c2 0 2-3 0-3h-7" fill="none" stroke="#fff" stroke-width="1.200"/>
<text x="1095" y="72.500" class="h" textLength="31" style="font-size:15px">测试</text>
<path d="M1139 67l4.500 5-4.500 5z" fill="#fff"/>
<text x="1154" y="73" class="hn" textLength="197" lengthAdjust="spacingAndGlyphs">PLC_1 [CPU 1215C DC/DC/Rly]</text>
<path d="M1363 67l4.500 5-4.500 5z" fill="#fff"/>
<text x="1379" y="72.500" class="h" textLength="49" style="font-size:15px">程序块</text>
<path d="M1440 67l4.500 5-4.500 5z" fill="#fff"/>
<text x="1456" y="73" class="hn" textLength="154" lengthAdjust="spacingAndGlyphs">Cyclic interrupt [OB30]</text>
<rect x="1825" y="74" width="11" height="3" fill="#fff"/><use href="#restore" x="1848" y="71.500"/>
<rect x="1862" y="66" width="11" height="11" fill="#fff"/><rect x="1862" y="67.500" width="11" height="1.500" fill="#b0b0b0"/><use href="#close" x="1884.500" y="71.500"/>

<!-- ============== LEFT STRIP ============== -->
<rect x="0" y="60" width="21" height="850" fill="#b0b0b0"/><rect x="21" y="60" width="1" height="850" fill="#2c3440"/>
<rect x="0" y="84" width="21" height="1" fill="#fff"/><rect x="0" y="305" width="21" height="1" fill="#fff"/>
<text transform="translate(8.500,196) rotate(-90)" class="m b" style="fill:#fff;font-size:13.500px">PLC 编程</text>

<!-- ============== PROJECT TREE ============== -->
<rect x="22" y="60" width="173" height="24" fill="#b0b0b0"/><rect x="22" y="84" width="173" height="3" fill="#ffa000"/>
<text x="28" y="71" class="b" style="fill:#fff;font-size:15px" textLength="46">项目树</text>
<rect x="160" y="66" width="10" height="10" fill="#f4f4f4" stroke="#888"/><path d="M163.500 66v10M166.500 66v10" stroke="#999"/>
<path d="M187 65v12l-6-6z" fill="#fff"/>
<rect x="22" y="87" width="173" height="24" fill="#c8c8c8"/>
<path d="M22 111.500h7M91 111.500h104" stroke="#858585"/>
<path d="M28.500 111V90.500h62V111" fill="url(#hz)" stroke="#888"/>
<text x="41" y="100" class="b" style="font-size:15px">设备</text>
<rect x="22" y="112" width="173" height="27" fill="#eaeaea"/>
<rect x="31" y="119" width="13" height="13" fill="#ccc" stroke="#888"/><path d="M33 123h9M33 127h9M37 120v11" stroke="#888"/><use href="#stg" x="41" y="119"/>
<path d="M138.500 115v22" stroke="#999" stroke-dasharray="1 2"/>
<rect x="143.500" y="114.500" width="21" height="21" fill="#f4f8ff" stroke="#3a6ad0"/><rect x="147" y="118" width="14" height="14" fill="#fff" stroke="#555"/><path d="M149 121h10M149 124h10M149 127h10M149 130h10" stroke="#667" stroke-width="1"/>
<rect x="171" y="119" width="12" height="13" fill="#fff" stroke="#555"/><rect x="171" y="119" width="12" height="3" fill="#d05030"/><path d="M173 125h8M173 128h8" stroke="#d07040" stroke-width="1.500"/><path d="M178 117h6v-2l3 4-3 4v-2h-4z" fill="#108030"/>
<rect x="22" y="139" width="173" height="21" fill="#c8c8c8"/>
<rect x="22" y="160" width="155" height="512" fill="url(#rowp)"/>
<rect x="22" y="198" width="135" height="18" fill="#cfd6de"/>
<path d="M22 198.500h116.500v17H22" fill="none" stroke="#333" stroke-dasharray="1.500 1.500"/>
<!-- tree items -->
<path d="M63 166h8l-4 5z" fill="#111"/>
<path d="M78 163h6l2 2h6v12h-14z" fill="#fbe9b0" stroke="#c09030"/><rect x="80" y="169" width="10" height="6" fill="#445"/>
<text x="98" y="169" style="font-size:14px;letter-spacing:1.500px">程序块</text>
<rect x="95" y="182" width="12" height="13" fill="#2a50d8"/><use href="#star" x="106" y="185"/><text x="115" y="192" style="font-size:10px">...</text>
<use href="#ob" x="102" y="207.500"/><text x="115" y="208" style="font-size:13.500px">Cy...</text>
<use href="#ob" x="102" y="226.500"/><text x="115" y="227" style="font-size:13.500px">Di...</text>
<use href="#ob" x="102" y="245.500"/><text x="115" y="246" style="font-size:13.500px">M...</text>
<use href="#ob" x="102" y="264.500"/><text x="115" y="265" style="font-size:13.500px">Pu...</text>
<use href="#ob" x="102" y="283.500"/><text x="115" y="284" style="font-size:13.500px">Ra...</text>
<use href="#ob" x="102" y="302.500"/><text x="115" y="303" style="font-size:13.500px">Ti...</text>
<use href="#fb" x="102" y="321.500"/><text x="115" y="322" style="font-size:13.500px">D...</text>
<use href="#fb" x="102" y="340.500"/><text x="115" y="341" style="font-size:13.500px">D...</text>
<use href="#fb" x="102" y="359.500"/><text x="115" y="360" style="font-size:13.500px">IO...</text>
<use href="#cyl" x="103" y="378.500"/><text x="115" y="379" style="font-size:13.500px">Fl...</text>
<use href="#cyl" x="103" y="397.500"/><text x="115" y="398" style="font-size:13.500px">Fl...</text>
<use href="#cyl" x="103" y="416.500"/><text x="115" y="417" style="font-size:13.500px">M...</text>
<use href="#cyl" x="103" y="435.500"/><text x="115" y="436" style="font-size:13.500px">te...</text>
<use href="#cyl" x="103" y="454.500"/><text x="115" y="455" style="font-size:13.500px">Va...</text>
<use href="#cyl" x="103" y="473.500"/><text x="115" y="474" style="font-size:13.500px">Va...</text>
<use href="#cyl" x="103" y="492.500"/><text x="115" y="493" style="font-size:13.500px">Va...</text>
<use href="#cyl" x="103" y="511.500"/><text x="115" y="512" style="font-size:13.500px">Va...</text>
<use href="#cyl" x="103" y="530.500"/><text x="115" y="531" style="font-size:13.500px">Va...</text>
<use href="#cyl" x="103" y="549.500"/><text x="115" y="550" style="font-size:13.500px">Va...</text>
<use href="#cyl" x="103" y="568.500"/><text x="115" y="569" style="font-size:13.500px">Va...</text>
<use href="#cyl" x="103" y="587.500"/><text x="115" y="588" style="font-size:13.500px">Va...</text>
<use href="#cyl" x="103" y="606.500"/><text x="115" y="611" style="font-size:10px">...</text>
<use href="#ar" x="83" y="625"/><use href="#fold" x="102" y="625.500"/><text x="115" y="626" style="font-size:13.500px">FB</text>
<use href="#ar" x="83" y="644"/><use href="#fold" x="102" y="644.500"/><text x="115" y="645" style="font-size:13.500px">FC</text>
<use href="#ar" x="83" y="663"/><use href="#fold" x="102" y="663.500"/><text x="115" y="668" style="font-size:10px">...</text>
<!-- columns -->
<rect x="138" y="160" width="39" height="512" fill="url(#rowp)"/><rect x="138" y="198" width="19" height="19" fill="#cfd6de"/>
<path d="M137.500 160v512" stroke="#b4b4b4"/><path d="M157.500 160v512" stroke="#fafafa"/>
<g>
<use href="#dot" x="166.500" y="169"/><use href="#dot" x="166.500" y="207"/><use href="#dot" x="166.500" y="226"/><use href="#dot" x="166.500" y="245"/><use href="#dot" x="166.500" y="264"/><use href="#dot" x="166.500" y="283"/><use href="#dot" x="166.500" y="302"/><use href="#dot" x="166.500" y="321"/><use href="#dot" x="166.500" y="340"/><use href="#dot" x="166.500" y="359"/><use href="#dot" x="166.500" y="378"/><use href="#dot" x="166.500" y="397"/><use href="#dot" x="166.500" y="416"/><use href="#dot" x="166.500" y="435"/><use href="#dot" x="166.500" y="454"/><use href="#dot" x="166.500" y="473"/><use href="#dot" x="166.500" y="492"/><use href="#dot" x="166.500" y="511"/><use href="#dot" x="166.500" y="530"/><use href="#dot" x="166.500" y="549"/><use href="#dot" x="166.500" y="568"/><use href="#dot" x="166.500" y="587"/><use href="#dot" x="166.500" y="606"/><use href="#dot" x="166.500" y="625"/><use href="#dot" x="166.500" y="644"/><use href="#dot" x="166.500" y="663"/>
</g>
<!-- tree scrollbar -->
<rect x="177" y="160" width="18" height="512" fill="#c0c0c0"/><use href="#up" x="186" y="170"/>
<rect x="178" y="215" width="16" height="150" fill="url(#vt)" stroke="#aaa"/><use href="#gv" x="186" y="290"/><use href="#dn" x="186" y="663"/>
<rect x="22" y="672" width="173" height="17" fill="#c0c0c0"/><use href="#lf" x="31" y="681"/><rect x="42" y="673" width="91" height="15" fill="url(#hz)" stroke="#aaa"/><use href="#gh" x="87" y="681"/><use href="#rt" x="168" y="681"/>

<!-- 参考项目 -->
<rect x="22" y="689" width="173" height="4" fill="#1e2a3a"/>
<rect x="22" y="693" width="173" height="21" fill="url(#hz)"/><path d="M22 713.500h173" stroke="#888"/><path d="M42.500 693v21" stroke="#aaa"/>
<path d="M28 701l4 4 4-4" fill="none" stroke="#222" stroke-width="2"/>
<text x="48" y="703" class="b" style="font-size:15px" textLength="65">参考项目</text>
<rect x="22" y="714" width="173" height="25" fill="#eaeaea"/>
<path d="M30 718h8l6 6v9H30z" fill="#fbe9a0" stroke="#b08020"/><path d="M36 717h4v4h3l-5 5-5-5h3z" fill="#108030"/>
<path d="M54 718h8l6 6v9H54z" fill="#fbe9a0" stroke="#b08020"/><path d="M58 722l4-5 4 5h-2.500v4h-3v-4z" fill="#223060"/>
<rect x="22" y="739" width="173" height="113" fill="url(#rowq)"/>
<use href="#ar" x="29" y="749"/><use href="#ar" x="29" y="768"/>
<path d="M41 742h7l5 5v11H41z" fill="#f4f6ff" stroke="#6a80d0"/><path d="M41 761h7l5 5v11H41z" fill="#f4f6ff" stroke="#6a80d0"/>
<rect x="56" y="740" width="124" height="18" fill="#c0ccd8"/>
<text x="58" y="749" style="font-size:15px" textLength="112">武穴人民医院修</text><text x="171" y="752" style="font-size:9px;font-weight:bold">...</text>
<text x="58" y="768" style="font-size:15px" textLength="112">锦州机房群控项</text><text x="171" y="771" style="font-size:9px;font-weight:bold">...</text>
<rect x="22" y="852" width="173" height="17" fill="#c0c0c0"/><use href="#lf" x="32" y="861"/><rect x="43" y="853" width="107" height="15" fill="url(#hz)" stroke="#aaa"/><use href="#gh" x="96" y="861"/><use href="#rt" x="185" y="861"/>
<rect x="22" y="869" width="173" height="4" fill="#1e2a3a"/>
<rect x="22" y="873" width="173" height="21" fill="url(#hz)"/><path d="M22 894.500h173" stroke="#888"/><path d="M42.500 873v21" stroke="#aaa"/>
<path d="M28 881l4 4 4-4" fill="none" stroke="#222" stroke-width="2"/>
<text x="48" y="884" class="b" style="font-size:15px" textLength="65">详细视图</text>

<!-- ============== DIVIDERS & BOTTOM ============== -->
<rect x="195" y="60" width="3" height="850" fill="#1e2a3a"/>
<rect x="1060" y="60" width="3" height="809" fill="#1e2a3a"/>
<rect x="198" y="869" width="1697" height="3" fill="#1e2a3a"/>
<rect x="198" y="872" width="1697" height="24" fill="#b0b0b0"/><rect x="198" y="896" width="1697" height="3" fill="#ffa000"/><rect x="198" y="899" width="1697" height="11" fill="#c8c8c8"/>
<!-- bottom sub tabs -->
<rect x="204.500" y="902.500" width="62" height="10" fill="#f2f2f2" stroke="#888"/><rect x="268.500" y="902.500" width="94" height="10" fill="#d8d8d8" stroke="#888"/><rect x="364.500" y="902.500" width="62" height="10" fill="#d8d8d8" stroke="#888"/><rect x="428.500" y="902.500" width="62" height="10" fill="#d8d8d8" stroke="#888"/>
<text x="217" y="912" class="b" style="font-size:14px">常规</text><text x="280" y="912" style="font-size:14px">交叉引用</text><text x="377" y="912" style="font-size:14px">编译</text><text x="441" y="912" style="font-size:14px">语法</text>
<!-- bottom right tabs -->
<rect x="1594.500" y="875.500" width="74" height="21" fill="#d0d0d0" stroke="#888"/>
<rect x="1671" y="875" width="74" height="24" fill="#e8e8e8"/><rect x="1671" y="875" width="74" height="2" fill="#ffa000"/>
<rect x="1746.500" y="875.500" width="74" height="21" fill="#d0d0d0" stroke="#888"/>
<rect x="1598" y="878" width="14" height="16" fill="#eef2fa" stroke="#2a50c0"/><circle cx="1606" cy="886" r="4" fill="#fff" stroke="#333" stroke-width="1.300"/><path d="M1609 889l4 4" stroke="#b08010" stroke-width="2"/>
<text x="1617" y="886" class="b" style="font-size:15px;fill:#333" textLength="32">属性</text>
<rect x="1675" y="879" width="14" height="15" fill="#eef2fa" stroke="#2a50c0"/><text x="1682" y="885" class="m b" style="font-family:'Liberation Serif';font-size:15px;fill:#102060">i</text><path d="M1686 891h6" stroke="#102060" stroke-width="2"/>
<text x="1693" y="886" class="b" style="font-size:15px" textLength="32">信息</text>
<rect x="1752" y="878" width="12" height="16" fill="#eef2fa" stroke="#2a50c0"/><path d="M1755 881v5c0 3 5 3 5 0v-5" fill="none" stroke="#223" stroke-width="1.200"/>
<text x="1769" y="886" class="b" style="font-size:15px;fill:#444" textLength="32">诊断</text>
<rect x="1842" y="881" width="9" height="11" fill="#fff"/><rect x="1845" y="878" width="8" height="3" fill="#f4f4f4"/>
<rect x="1861" y="878" width="10" height="14" fill="none" stroke="#fff"/><path d="M1861 882h10M1861 885h10M1861 888h10" stroke="#fff"/>
<path d="M1878 881h12l-6 6z" fill="#fff"/>

<!-- ============== RIGHT TABS ============== -->
<rect x="1895" y="60" width="23" height="850" fill="#b0b0b0"/><rect x="1895" y="60" width="1" height="850" fill="#555"/>
<path d="M1909 65v12l-6-6z" fill="#fff"/>
<g fill="#e6e6e6" stroke="#8a8a8a"><rect x="1896.500" y="91.500" width="20" height="72"/><rect x="1896.500" y="167.500" width="20" height="72"/><rect x="1896.500" y="242.500" width="20" height="73"/><rect x="1896.500" y="318.500" width="20" height="58"/><rect x="1896.500" y="378.500" width="20" height="60"/></g>
<g fill="#fff" stroke="#555"><rect x="1899" y="94" width="6" height="6"/><rect x="1908" y="94" width="6" height="6"/><rect x="1899" y="103" width="6" height="6"/><rect x="1908" y="103" width="6" height="6"/></g>
<text transform="translate(1906.500,128) rotate(90)" class="m b" style="font-size:14px;fill:#666;letter-spacing:2px">指令</text>
<rect x="1901" y="171" width="10" height="14" fill="#eef2fa" stroke="#2a50c0"/><path d="M1903 173v5c0 3 5 3 5 0v-5" fill="none" stroke="#223"/>
<text transform="translate(1906.500,205) rotate(90)" class="m b" style="font-size:14px;fill:#111;letter-spacing:2px">测试</text>
<rect x="1899" y="246" width="11" height="13" fill="#f8f0c0" stroke="#806020"/><path d="M1901 250h7M1901 253h7" stroke="#335"/><path d="M1904 255l3 3 6-7" fill="none" stroke="#20a030" stroke-width="2"/>
<text transform="translate(1906.500,281) rotate(90)" class="m b" style="font-size:14px;fill:#666;letter-spacing:2px">任务</text>
<path d="M1899 323h7v12h-7zM1906 323h7v12h-7z" fill="#f4f8ff" stroke="#2030b0"/>
<text transform="translate(1906.500,347) rotate(90)" class="m b" style="font-size:14px;fill:#777">库</text>
<text transform="translate(1906.500,406) rotate(90)" class="m b" style="font-size:14px;fill:#777;letter-spacing:2px">插件</text>

<!-- ============== TITLE BAR, MENU, TOOLBAR ============== -->
<rect x="0" y="0" width="1918" height="59" fill="#c8c8c8"/>
<rect x="0" y="0" width="1918" height="9" fill="#1a1a1a"/>
<text x="4" y="1" class="b" style="fill:#7f8fa8;font-size:12px">V16</text>
<text x="26.500" y="-1" style="fill:#ddd;font-size:13px">Siemens</text>
<text x="98" y="-1" class="b" style="fill:#ddd;font-size:13.500px" textLength="134">D:\PLC程序\调试\调试</text>
<path d="M1872 .5h8M1888 0v1h5v-1M1903 0l2 2M1911 0l-2 2" stroke="#fff"/>
<rect x="0" y="59" width="1918" height="1.500" fill="#2a2a2a"/>
<g>
<text x="11" y="23" style="font-size:13.500px">项目(P)</text><text x="75.500" y="23" style="font-size:13.500px">编辑(E)</text><text x="141.500" y="23" style="font-size:13.500px">视图(V)</text><text x="208.500" y="23" style="font-size:13.500px">插入(I)</text><text x="270.500" y="23" style="font-size:13.500px">在线(O)</text><text x="339" y="23" style="font-size:13.500px">选项(N)</text><text x="406.500" y="23" style="font-size:13.500px">工具(T)</text><text x="472.500" y="23" style="font-size:13.500px">窗口(W)</text><text x="542" y="23" style="font-size:13.500px">帮助(H)</text>
</g>
<!-- toolbar -->
<path d="M138.500 34v23M167.500 34v23M268.500 34v23M344.500 34v23M469.500 34v23M637.500 34v23M714.500 34v23M743.500 34v23" stroke="#999" stroke-dasharray="1 2"/>
<rect x="13" y="38" width="13" height="15" fill="#f2f6ff" stroke="#6a80d0"/><use href="#star" transform="translate(24,40) scale(1.200)"/>
<path d="M36 39h5l2 2h7v12H36z" fill="#fbe9a0" stroke="#b08020"/><path d="M43 35h4v5h4l-6 6-6-6h4z" fill="#108030"/>
<rect x="57" y="38" width="14" height="15" fill="#1060d0"/><rect x="60" y="38" width="8" height="6" fill="#fff"/><rect x="60" y="47" width="8" height="6" fill="#ddeeff"/>
<text x="79" y="46" textLength="51" style="font-size:13px">保存项目</text>
<rect x="148" y="38" width="10" height="10" fill="#fff" stroke="#222"/><path d="M150 41h6M150 43.500h6M150 46h6" stroke="#223"/><path d="M146 48h14l2 6h-18z" fill="#2848d0"/>
<path d="M178 38l7 11M187 38l-7 11" stroke="#2040a0" stroke-width="2"/><circle cx="178" cy="51" r="2.500" fill="none" stroke="#2040a0" stroke-width="1.500"/><circle cx="187" cy="51" r="2.500" fill="none" stroke="#2040a0" stroke-width="1.500"/>
<rect x="200" y="38" width="9" height="12" fill="#fff" stroke="#2848a0"/><rect x="204" y="41" width="10" height="13" fill="#fff" stroke="#2848a0"/><path d="M206 44h6M206 47h6M206 50h6" stroke="#223"/>
<rect x="224" y="38" width="10" height="13" fill="#e8e8e8" stroke="#888"/><rect x="228" y="42" width="9" height="12" fill="#fff" stroke="#888"/><path d="M230 45h5M230 48h5M230 51h5" stroke="#666"/>
<path d="M249 40l12 12M261 40l-12 12" stroke="#101a50" stroke-width="3"/>
<path d="M276 40v8h5M276 46c3-6 14-4 12 4 0 2-2 3-4 4" fill="none" stroke="#777" stroke-width="3"/>
<use href="#dlg" x="298.500" y="47"/><path d="M326 40v8h-5M326 46c-3-6-14-4-12 4 0 2 2 3 4 4" fill="none" stroke="#777" stroke-width="3"/><use href="#dlg" x="333.500" y="47"/>
<rect x="352" y="38" width="10" height="9" fill="#ddd" stroke="#555"/><rect x="357" y="43" width="9" height="11" fill="#fff" stroke="#2040a0"/><rect x="359" y="46" width="5" height="4" fill="#2040a0"/>
<rect x="376" y="38" width="14" height="15" fill="#4a4a5a"/><rect x="378" y="38" width="10" height="15" fill="#30b0e8"/><path d="M383 37v10h3l-3.500 5-3.500-5h3V37z" fill="#fff"/>
<rect x="400" y="38" width="14" height="15" fill="#777"/><path d="M407 37l4 5h-2.500v9h-3v-9H403z" fill="#e8e8e8"/>
<rect x="424" y="38" width="13" height="9" fill="#888"/><rect x="426" y="40" width="9" height="5" fill="#d8d8d8"/><rect x="424" y="49" width="13" height="4" fill="#888"/>
<rect x="448" y="38" width="13" height="15" fill="#888"/><path d="M451 42h7l-3.500 3z" fill="#ddd"/><text x="455" y="50" class="m b" style="font-size:7px;fill:#222">RT</text>
<path d="M474 53l4-2 7-9 3-4-3-1-3 2-7 9z" fill="#bbb" stroke="#777"/><path d="M484 38l4-3" stroke="#777" stroke-width="2"/>
<text x="495.500" y="46" textLength="51.500" style="font-size:13px;fill:#8a8a8a">转至在线</text>
<path d="M555 53l4-2 7-9 3-4-3-1-3 2-7 9z" fill="#4068d8" stroke="#20308a"/><path d="M566 38l4-3" stroke="#20308a" stroke-width="2"/>
<text x="577.500" y="46" textLength="51" style="font-size:13px">转至离线</text>
<rect x="647" y="42" width="9" height="11" fill="#2a60a0"/><path d="M650 41c0-6 5-6 5-1" fill="none" stroke="#2a60a0" stroke-width="1.600"/><text x="657" y="48" class="b" style="font-size:12px;fill:#113">?</text>
<rect x="670" y="38" width="14" height="15" fill="#8a8a8a"/><rect x="670" y="38" width="5" height="15" fill="#666"/><path d="M677 46l5 3-5 3z" fill="#eee"/>
<rect x="693" y="38" width="14" height="15" fill="#555"/><rect x="693" y="38" width="5" height="15" fill="#2a8a9a"/><rect x="700" y="45" width="6" height="7" fill="#f01010"/>
<rect x="723" y="39" width="13" height="12" fill="#e8ecff" stroke="#3050c0"/><path d="M724 40l10 11M734 40l-10 11" stroke="#111" stroke-width="2.600"/>
<rect x="752" y="38" width="15" height="15" fill="#eef2ff" stroke="#2848b8"/><path d="M752 45.500h15" stroke="#2848b8"/>
<rect x="772.500" y="35.500" width="21" height="21" fill="#f4f8ff" stroke="#3a6ad0"/><rect x="776" y="38" width="14" height="16" fill="#eef2ff" stroke="#2848b8"/><path d="M783 38v16" stroke="#2848b8"/>
<rect x="803.500" y="38.500" width="119" height="17" fill="#f8f8f8" stroke="#888"/>
<text x="806" y="47" style="font-size:13.500px;fill:#666" textLength="114">&lt;在项目中搜索&gt;</text>
<path d="M932.500 38.500h8v10h-8z" fill="#eef2ff" stroke="#5068c8"/><path d="M934 41h5M934 43.500h5M934 46h3" stroke="#5068c8" stroke-width=".8"/>
<path d="M937 46h3v2h3v-2h3l1 7h-4v-3h-3v3h-4z" fill="#14205c"/>
<text x="1672" y="30" textLength="198.500" style="font-size:13.500px;fill:#111">Totally Integrated Automation</text>
<text x="1896" y="45" class="e b" style="font-size:16.500px;fill:#555" textLength="65">PORTAL</text>

<!-- ============== POPUP TIMER ============== -->
<rect x="1589.500" y="113.500" width="211" height="197" fill="#f3f3f3" stroke="#d4d4d4" filter="url(#sh)"/>
<path d="M1613 131h8.500a2.500 2.500 0 0 1 2.500 2.500v11a2.500 2.500 0 0 1-2.500 2.500h-6M1607 142v-8.500a2.500 2.500 0 0 1 2.500-2.500h3.500v7.500h11" fill="none" stroke="#333" stroke-width="1.100"/>
<path d="M1614.500 140l-7.500 7.500M1607 142.500v5h5" fill="none" stroke="#333" stroke-width="1.100"/>
<text x="1612.500" y="195" style="font-size:37px;fill:#262626;dominant-baseline:auto" textLength="132" lengthAdjust="spacingAndGlyphs">00:10:14</text>
<text x="1744.500" y="195" style="font-size:24px;fill:#333;dominant-baseline:auto" textLength="33.500" lengthAdjust="spacingAndGlyphs">.04</text>
<text x="1614" y="212" style="font-size:16px;fill:#333">小时</text><text x="1661" y="212" style="font-size:16px;fill:#333">分钟</text><text x="1716" y="212" style="font-size:16px;fill:#333">秒</text>
<circle cx="1668.500" cy="269" r="21.500" fill="#005a9e"/>
<rect x="1662.500" y="262.500" width="4" height="14" rx="1" fill="#fff"/><rect x="1672" y="262.500" width="4" height="14" rx="1" fill="#fff"/>
<circle cx="1722" cy="269" r="20" fill="#fbfbfb" stroke="#e8e8e8"/>
<path d="M1716 266a7 7 0 1 1 1 8M1716 262v4.500h4.500" fill="none" stroke="#444" stroke-width="1.100"/>
</svg>
</body></html>
